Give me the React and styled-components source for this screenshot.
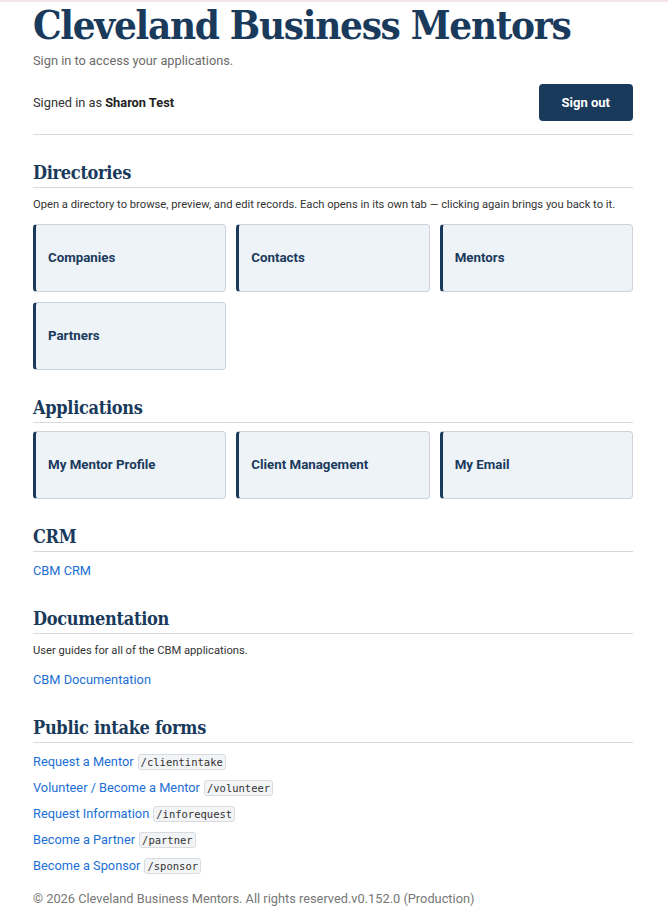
import React from "react";
import styled, { createGlobalStyle } from "styled-components";

const NAVY = "#1a3a5c";
const LINK = "#1c6fd5";
const SLAB = `"Roboto Slab", "DejaVu Serif Condensed", "DejaVu Serif", serif`;

const directories = ["Companies", "Contacts", "Mentors", "Partners"];
const applications = ["My Mentor Profile", "Client Management", "My Email"];
const intakeForms = [
  { label: "Request a Mentor", path: "/clientintake" },
  { label: "Volunteer / Become a Mentor", path: "/volunteer" },
  { label: "Request Information", path: "/inforequest" },
  { label: "Become a Partner", path: "/partner" },
  { label: "Become a Sponsor", path: "/sponsor" },
];

const App = () => {
  return (
    <>
      <GlobalStyle />
      <Page>
        <Title>Cleveland Business Mentors</Title>
        <Subtitle>Sign in to access your applications.</Subtitle>
        <UserBar>
          <SignedIn>
            Signed in as <strong>Sharon Test</strong>
          </SignedIn>
          <SignOutButton>Sign out</SignOutButton>
        </UserBar>

        <Section>
          <SectionTitle>Directories</SectionTitle>
          <Note>
            Open a directory to browse, preview, and edit records. Each opens in its own tab — clicking again
            brings you back to it.
          </Note>
          <CardGrid>
            {directories.map((name) => (
              <Card key={name} href="#">
                {name}
              </Card>
            ))}
          </CardGrid>
        </Section>

        <Section>
          <SectionTitle>Applications</SectionTitle>
          <CardGrid tight>
            {applications.map((name) => (
              <Card key={name} href="#">
                {name}
              </Card>
            ))}
          </CardGrid>
        </Section>

        <Section>
          <SectionTitle>CRM</SectionTitle>
          <LinkRow>
            <TextLink href="#">CBM CRM</TextLink>
          </LinkRow>
        </Section>

        <Section>
          <SectionTitle>Documentation</SectionTitle>
          <Note>User guides for all of the CBM applications.</Note>
          <LinkRow spaced>
            <TextLink href="#">CBM Documentation</TextLink>
          </LinkRow>
        </Section>

        <Section>
          <SectionTitle>Public intake forms</SectionTitle>
          {intakeForms.map((form) => (
            <LinkRow key={form.path}>
              <TextLink href="#">{form.label}</TextLink>
              <PathTag>{form.path}</PathTag>
            </LinkRow>
          ))}
        </Section>

        <Footer>© 2026 Cleveland Business Mentors. All rights reserved.v0.152.0 (Production)</Footer>
      </Page>
    </>
  );
};

export default App;

const GlobalStyle = createGlobalStyle`
  body {
    margin: 0;
    border-top: 2px solid #f6e6e8;
    background: #fff;
    font-family: Roboto, "Liberation Sans", sans-serif;
    color: #333;
  }
`;

const Page = styled.main`
  width: 600px;
  margin: 0 auto;
  padding: 0 2px 6px 0;
`;

const Title = styled.h1`
  margin: 0;
  font-family: ${SLAB};
  font-size: 40px;
  line-height: 46px;
  font-weight: 700;
  letter-spacing: -1.3px;
  white-space: nowrap;
  color: ${NAVY};
`;

const Subtitle = styled.p`
  margin: 4px 0 0;
  font-size: 12.8px;
  line-height: 18px;
  color: #6b6b6b;
`;

const UserBar = styled.div`
  display: flex;
  align-items: center;
  justify-content: space-between;
  margin-top: 14px;
  padding-bottom: 13px;
  border-bottom: 1px solid #d5d8dd;
`;

const SignedIn = styled.span`
  font-size: 12.8px;
  color: #333;

  strong {
    font-weight: 700;
    color: #222;
  }
`;

const SignOutButton = styled.button`
  height: 37px;
  padding: 0 23px;
  border: none;
  border-radius: 4px;
  background: ${NAVY};
  color: #fff;
  font-family: Roboto, "Liberation Sans", sans-serif;
  font-size: 13px;
  font-weight: 700;
  cursor: pointer;
`;

const Section = styled.section`
  margin-top: 26px;
`;

const SectionTitle = styled.h2`
  margin: 0;
  padding-bottom: 3px;
  border-bottom: 1px solid #d5d8dd;
  font-family: ${SLAB};
  font-size: 18px;
  line-height: 23px;
  font-weight: 700;
  letter-spacing: -0.3px;
  color: ${NAVY};
`;

const Note = styled.p`
  margin: 9px 0 0;
  font-size: 11.2px;
  line-height: 16px;
  color: #333;
`;

const CardGrid = styled.div`
  display: grid;
  grid-template-columns: repeat(3, 1fr);
  gap: 10px;
  margin: ${(p) => (p.tight ? "8px 0 1px" : "11px 0 0")};
`;

const Card = styled.a`
  display: flex;
  align-items: center;
  height: 68px;
  box-sizing: border-box;
  padding: 0 0 1px 12px;
  background: #eef3f8;
  border: 1px solid #ccd3db;
  border-left: 3px solid ${NAVY};
  border-radius: 4px;
  color: ${NAVY};
  font-size: 13.3px;
  font-weight: 700;
  text-decoration: none;
`;

const LinkRow = styled.div`
  display: flex;
  align-items: center;
  gap: 4px;
  margin-top: ${(p) => (p.spaced ? "11px" : "6px")};
  line-height: 20px;
  &:nth-child(2) {
    margin-top: 9px;
  }
`;

const TextLink = styled.a`
  font-size: 12.8px;
  color: ${LINK};
  text-decoration: none;
`;

const PathTag = styled.code`
  display: inline-block;
  padding: 0 2px;
  font-family: "DejaVu Sans Mono", "Liberation Mono", monospace;
  font-size: 10.5px;
  line-height: 14px;
  color: #333;
  background: #f2f4f6;
  border: 1px solid #d8dce0;
  border-radius: 3px;
`;

const Footer = styled.footer`
  margin-top: 14px;
  font-size: 12.8px;
  line-height: 18px;
  color: #777;
`;
